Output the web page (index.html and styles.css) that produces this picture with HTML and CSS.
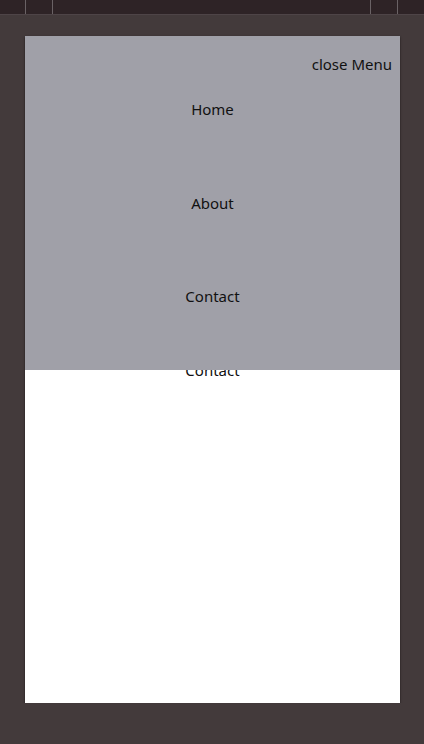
FILE: index.html
```html
<!DOCTYPE html>
<html>
<head>
<meta charset="utf-8">
<link rel="stylesheet" href="styles.css">
</head>
<body>
<div class="topbar">
  <div class="tabs"></div>
  <div class="tabs"></div>
</div>
<div class="stage">
  <div class="device">
    <ul class="page-nav">
      <li>Home</li>
      <li>About</li>
      <li>Contact</li>
    </ul>
    <div class="overlay">
      <div class="close">close Menu</div>
      <ul class="menu">
        <li>Home</li>
        <li>About</li>
        <li>Contact</li>
      </ul>
    </div>
  </div>
</div>
</body>
</html>
```
FILE: styles.css
```css
html, body {
  margin: 0;
  padding: 0;
  background: #433a3b;
  font-family: "Noto Sans", "Open Sans", sans-serif;
  font-size: 15px;
  color: #111;
}
.topbar {
  height: 14px;
  background: #2e2326;
  border-bottom: 1px solid #4e4447;
  display: flex;
  justify-content: space-between;
  padding: 0 26px 0 25px;
}
.tabs {
  width: 26px;
  border-left: 1px solid #6a6265;
  border-right: 1px solid #6a6265;
}
.stage {
  padding: 21px 24px 0 25px;
}
.device {
  position: relative;
  width: 375px;
  height: 667px;
  background: #fff;
  box-shadow: 0 1px 2px rgba(0, 0, 0, 0.6);
  overflow: hidden;
}
.page-nav {
  list-style: none;
  margin: 0;
  padding: 324px 0 0;
  text-align: center;
  line-height: 20px;
}
.page-nav li:not(:last-child) {
  display: none;
}
.overlay {
  position: absolute;
  top: 0;
  left: 0;
  right: 0;
  height: 334px;
  background: #a0a0a8;
  display: flex;
  flex-direction: column;
}
.close {
  align-self: flex-end;
  margin: 18px 8px 0 0;
  line-height: 20px;
}
.menu {
  list-style: none;
  margin: 25px 0 0;
  padding: 0;
  text-align: center;
  line-height: 20px;
  display: flex;
  flex-direction: column;
  gap: 73.5px;
}
```
